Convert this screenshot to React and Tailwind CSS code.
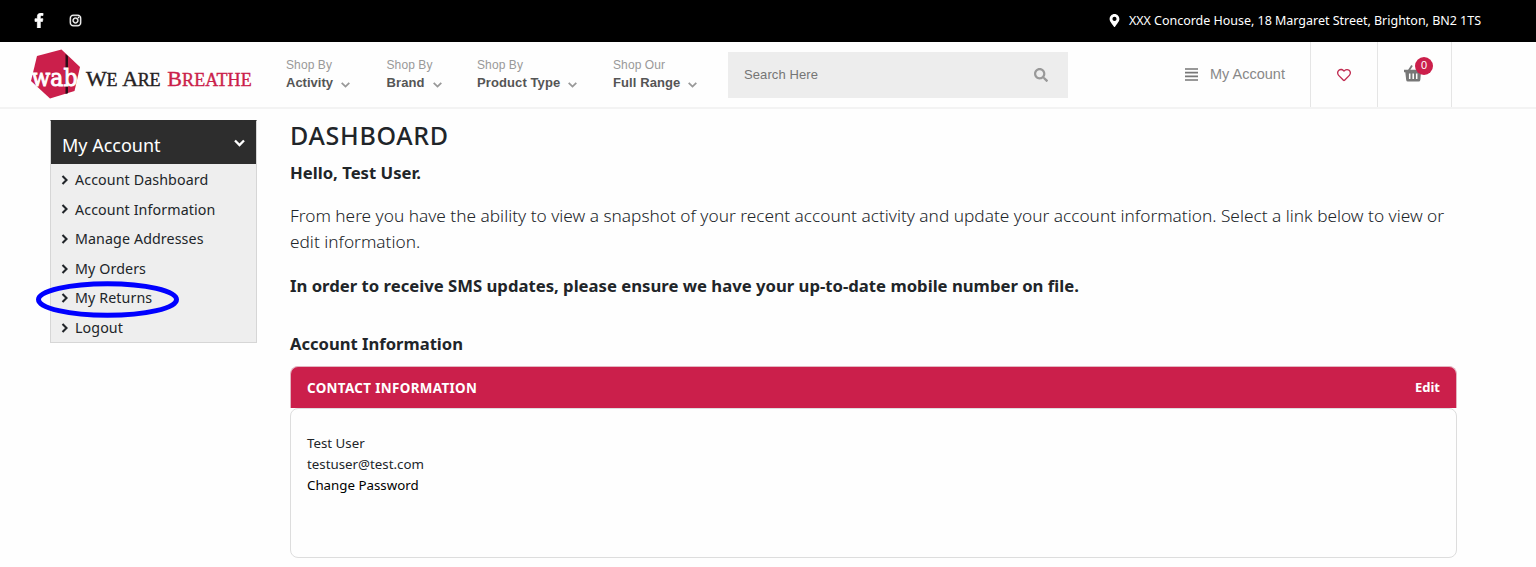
import { FaFacebookF, FaInstagram, FaMapMarkerAlt, FaSearch, FaRegHeart } from "react-icons/fa";

const shopMenus = [
  { top: "Shop By", label: "Activity", pos: "w-[100.5px]", track: "tracking-[0px]" },
  { top: "Shop By", label: "Brand", pos: "w-[90.5px]", track: "tracking-[0.1px]" },
  { top: "Shop By", label: "Product Type", pos: "w-[136px]", track: "tracking-[0.1px]" },
  { top: "Shop Our", label: "Full Range", pos: "w-[115px]", track: "tracking-[0.1px]" },
];

const accountLinks = ["Account Dashboard", "Account Information", "Manage Addresses", "My Orders", "My Returns", "Logout"];

function Logo() {
  return (
    <div className="flex h-[52px] w-[228px] items-center">
      <svg className="h-[52px] w-[54px] shrink-0" viewBox="0 0 54 52">
        <path d="M8 7 32.500 0.500 51 18 45.500 42 21 49.500 2 32Z" fill="#cb1f4b" />
        <path d="M36.500 5v40l2.500-.8V7.200Z" fill="#2b0d18" />
        <text x="2.500" y="37" fill="#fff" stroke="#fff" strokeWidth="0.900" fontFamily="'DejaVu Serif', serif" fontSize="24" textLength="46" lengthAdjust="spacingAndGlyphs">wab</text>
      </svg>
      <div className="flex items-baseline pt-[8px] pl-[3px] font-['Liberation_Serif',serif] text-[18px] leading-none whitespace-nowrap text-[#262223] [-webkit-text-stroke:0.400px]">
        <span className="tracking-[-0.3px]"><span className="text-[22px]">W</span>E</span>
        <span className="ml-[5px] tracking-[-0.3px]"><span className="text-[22px]">A</span>RE</span>
        <span className="ml-[7px] tracking-[0.150px] text-[#cb1f4b]"><span className="text-[22px]">B</span>REATHE</span>
      </div>
    </div>
  );
}

function BasketIcon() {
  return (
    <svg className="h-[17px] w-[19px]" viewBox="0 0 19 17" fill="#777">
      <path d="M0 4.800h18v2.400h-1L16.300 15q-.2 1.500-1.600 1.500H3.800Q2.400 16.500 2.200 15L1.300 7.200H0Z" />
      <path d="M4.500 6 8 .6" stroke="#777" strokeWidth="1.800" />
      <path d="M5.700 8.500v5.500M9.200 8.500v5.500M12.700 8.500v5.500" stroke="#fff" strokeWidth="1.500" />
    </svg>
  );
}

export default function App() {
  return (
    <div className="h-[567px] overflow-hidden bg-[#fefefe] font-['Noto_Sans',sans-serif] text-[#212529]">
      <div className="flex h-[42px] items-center justify-between bg-black pr-[55px] pl-[34px] text-white">
        <div className="flex items-center gap-[25px] pb-[2px]">
          <FaFacebookF className="h-[15px] w-[10px]" stroke="#fff" strokeWidth="24" />
          <FaInstagram className="size-[13px]" stroke="#fff" strokeWidth="16" />
        </div>
        <div className="flex items-center gap-[9px] text-[12.500px] tracking-[-0.020px]">
          <FaMapMarkerAlt className="mb-[2px] h-[13px] w-[11px]" />
          <span>XXX Concorde House, 18 Margaret Street, Brighton, BN2 1TS</span>
        </div>
      </div>

      <header className="flex h-[67px] border-b-2 border-[#f3f3f3] font-['Liberation_Sans',sans-serif]">
        <div className="flex w-[286px] shrink-0 items-center pl-[29px]"><Logo /></div>
        <nav className="flex w-[442px] shrink-0 pt-[15px]">
          {shopMenus.map((m) => (
            <div key={m.label} className={`${m.pos} shrink-0`}>
              <div className="text-[12px] leading-[16px] tracking-[0.1px] text-[#999]">{m.top}</div>
              <div className="flex items-center gap-[8px] text-[13px] leading-[20px] font-bold whitespace-nowrap text-[#555]">
                <span className={m.track}>{m.label}</span>
                <svg className="mt-[3px] h-[6px] w-[9px]" viewBox="0 0 9 6" fill="none" stroke="#999" strokeWidth="1.800"><path d="m.7.8 3.800 3.800L8.300.8" /></svg>
              </div>
            </div>
          ))}
        </nav>
        <div className="mt-[10px] flex h-[46px] w-[340px] shrink-0 items-center justify-between bg-[#ededed] pr-[20px] pl-4 text-[13px] tracking-[0.1px] text-[#757575]">
          <span>Search Here</span>
          <FaSearch className="size-[14px] text-[#999]" />
        </div>
        <div className="ml-auto flex w-[125px] items-center gap-[12px] text-[14.500px] text-[#888]">
          <svg className="h-[13px] w-[13px]" viewBox="0 0 13 13" stroke="#777" strokeWidth="1.700"><path d="M0 1h13M0 4.700h13M0 8.300h13M0 12h13" /></svg>
          <span>My Account</span>
        </div>
        <div className="flex w-[67px] items-center justify-center border-l border-[#e5e5e5]">
          <FaRegHeart className="size-[14px] text-[#c02a50]" />
        </div>
        <div className="relative flex w-[75px] items-center border-x border-[#e5e5e5] pb-0.5 pl-[26px]">
          <BasketIcon />
          <span className="absolute top-[15px] left-[37px] flex size-[18px] items-center justify-center rounded-full bg-[#cb1f4b] pb-px text-[11px] text-white">0</span>
        </div>
        <div className="w-[84px] shrink-0" />
      </header>

      <div className="flex pl-[50px]">
        <aside className="mt-[11px] h-[223px] w-[207px] shrink-0 border border-[#d6d6d6] border-t-[#2d2d2d] bg-[#eee]">
          <div className="flex h-[43px] items-center justify-between bg-[#2d2d2d] pt-[5px] pr-[11px] pl-[11px] text-[18px] text-white">
            <span>My Account</span>
            <svg className="mb-1 h-[8px] w-[11px]" viewBox="0 0 11 8" fill="none" stroke="#fff" strokeWidth="2.300"><path d="m1 1.500 4.500 4.500L10 1.500" /></svg>
          </div>
          <ul className="pt-px">
            {accountLinks.map((l) => (
              <li key={l} className="relative flex h-[29.600px] items-center gap-[5px] pl-[10px] text-[14.250px] tracking-[0.1px]">
                <svg className="mr-px h-[10px] w-[8px]" viewBox="0 0 8 10" fill="none" stroke="#212529" strokeWidth="2.100"><path d="m1.500 1 4 4-4 4" /></svg>
                <span>{l}</span>
                {l === "My Returns" && (
                  <svg className="absolute top-[-3px] left-[-15px] h-[38px] w-[144px]" viewBox="0 0 144 38"><ellipse cx="71.500" cy="19.500" rx="69" ry="15.800" fill="none" stroke="#00f" strokeWidth="5" /></svg>
                )}
              </li>
            ))}
          </ul>
        </aside>

        <main className="ml-[33px] w-[1167px]">
          <h1 className="mt-[10px] text-[25px] leading-[32px] font-medium tracking-[0.700px]">DASHBOARD</h1>
          <p className="mt-[9px] text-[16.700px] leading-[26px] font-bold">Hello, Test User.</p>
          <p className="mt-[17px] text-[17.280px] leading-[26px] font-light whitespace-nowrap">
            From here you have the ability to view a snapshot of your recent account activity and update your account information. Select a link below to view or<br />edit information.
          </p>
          <p className="mt-[18px] text-[16.700px] leading-[26px] font-bold">In order to receive SMS updates, please ensure we have your up-to-date mobile number on file.</p>
          <h2 className="mt-[32px] text-[16.600px] leading-[26px] font-bold">Account Information</h2>
          <section className="mt-[9px]">
            <div className="flex h-[42px] items-center justify-between rounded-t-lg border border-b-0 border-[#e3b5c1] bg-[#cb1f4b] px-4 pt-px text-[13px] font-bold text-white">
              <span className="text-[13.400px] tracking-[0.350px]">CONTACT INFORMATION</span>
              <span>Edit</span>
            </div>
            <div className="h-[150px] rounded-lg border border-[#ddd] pt-[24px] pl-4 text-[13.300px] leading-[21px]">
              <p>Test User</p>
              <p>testuser@test.com</p>
              <p className="text-black">Change Password</p>
            </div>
          </section>
        </main>
      </div>
    </div>
  );
}
